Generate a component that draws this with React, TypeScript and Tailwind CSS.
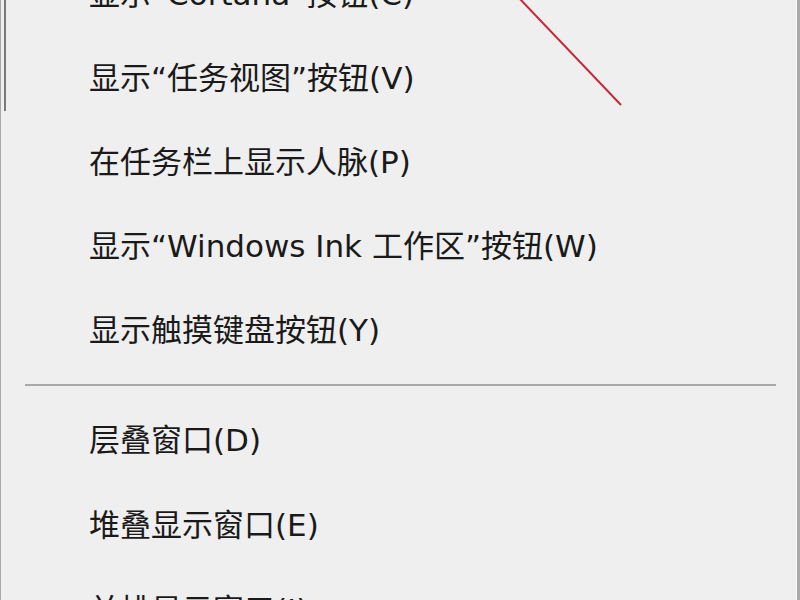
import React from "react";

const topItems = [
  "显示“Cortana”按钮(C)",
  "显示“任务视图”按钮(V)",
  "在任务栏上显示人脉(P)",
  "显示“Windows Ink 工作区”按钮(W)",
  "显示触摸键盘按钮(Y)",
];

const bottomItems = ["层叠窗口(D)", "堆叠显示窗口(E)", "并排显示窗口(I)"];

export default function App() {
  return (
    <div
      className="relative w-[800px] h-[600px] overflow-hidden bg-[#efefef] text-[#1a1a1a] border-l border-l-[#a9a9a9] border-r-[3px] border-r-[#a9a9a9]"
      style={{ fontFamily: '"DejaVu Sans", "Noto Sans CJK SC", sans-serif' }}
    >
      <div className="flex flex-col -mt-[48px]">
        {topItems.map((t) => (
          <div key={t} className="h-[84px] shrink-0 flex items-center pl-[88px] text-[31px] leading-none whitespace-nowrap">
            {t}
          </div>
        ))}
        <div className="h-[26px] shrink-0 flex items-center pl-[24px] pr-[21px]">
          <div className="w-full h-[2px] bg-[#a8a8a8]" />
        </div>
        {bottomItems.map((t) => (
          <div key={t} className="h-[85px] shrink-0 flex items-center pl-[88px] text-[31px] leading-none whitespace-nowrap">
            {t}
          </div>
        ))}
      </div>
      <div className="absolute right-0 top-0 w-px h-full bg-[#f8f8f8]" />
      {/* window edge behind at top-left */}
      <div className="absolute left-[3px] top-0 w-[2px] h-[111px] bg-[#7a7a7a]" />
      {/* red annotation line */}
      <svg className="absolute left-0 top-0 pointer-events-none" width="800" height="600">
        <line x1="518" y1="-2" x2="620" y2="105" stroke="#c42a36" strokeWidth="2" />
      </svg>
    </div>
  );
}
